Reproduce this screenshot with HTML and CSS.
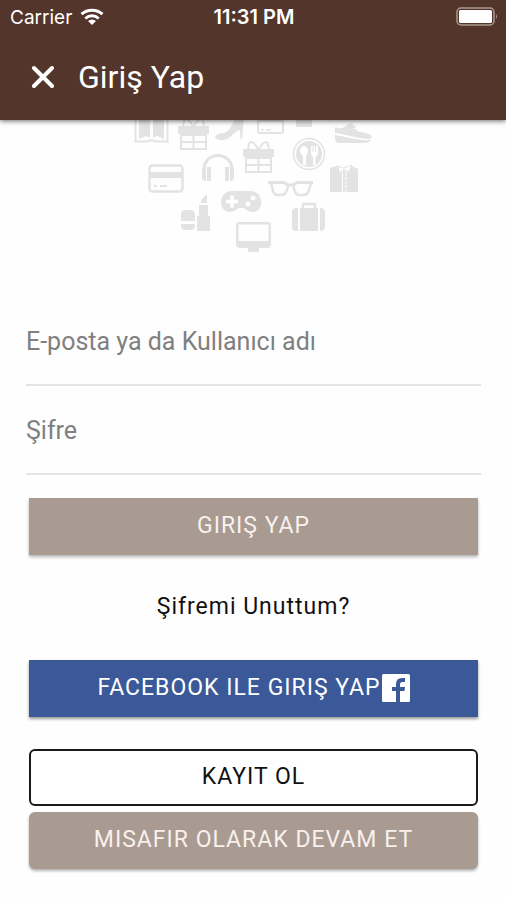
FILE: index.html
```html
<!DOCTYPE html>
<html lang="tr">
<head>
<meta charset="utf-8">
<meta name="viewport" content="width=device-width, initial-scale=1">
<title>Giriş Yap</title>
<link rel="stylesheet" href="styles.css">
</head>
<body>
<header class="header">
  <div class="status">
    <div class="status-carrier">
      <span>Carrier</span>
      <svg width="24" height="18" viewBox="0 0 24 18" fill="none" stroke="#fff" stroke-width="3" aria-hidden="true">
        <path d="M1.500 6.200C7.500.8 16.500.8 22.500 6.200M5.300 10.500C9.300 6.800 14.700 6.800 18.700 10.500"/>
        <path d="M12 17L8 13Q12 9.800 16 13Z" fill="#fff" stroke="none"/>
      </svg>
    </div>
    <time class="status-time">11:31 PM</time>
    <svg class="battery" width="42" height="20" viewBox="0 0 42 20" aria-hidden="true">
      <rect x="1" y="1" width="37" height="17" rx="4" fill="none" stroke="#a99a93" stroke-width="1.500"/>
      <rect x="3" y="3" width="33" height="13" rx="1.500" fill="#fff"/>
      <path d="M40 7q2 2.500 0 5z" fill="#a99a93"/>
    </svg>
  </div>
  <div class="toolbar">
    <button class="close" type="button" aria-label="Kapat">
      <svg width="24" height="24" viewBox="0 0 24 24" stroke="#fff" stroke-width="4" stroke-linecap="round" aria-hidden="true"><path d="M4 3L22 21M22 3L4 21"/></svg>
    </button>
    <h1 class="title">Giriş Yap</h1>
  </div>
</header>
<main class="content">
  <svg class="hero" width="240" height="136" viewBox="134 120 240 136" fill="#e3e3e3" aria-hidden="true">
    <!-- book -->
    <path d="M135.500 118V141.500H147L151.500 140L156 141.500H167.500V118" fill="none" stroke="#e3e3e3" stroke-width="2"/>
    <path d="M139 118H150V138L146 136L139 139ZM153 118H164V139L157 136L153 138Z"/>
    <!-- gift boxes -->
    <g id="gift">
      <path d="M178 126H209V134H178Z"/>
      <path d="M180 134H207V150H180ZM182 136V141H192.500V136ZM194.500 136V141H205V136ZM182 143V148H192.500V143ZM194.500 143V148H205V143Z" fill-rule="evenodd"/>
      <path d="M193 126C189 119 185 117 184 121L183 126M194 126C198 119 202 117 203 121L204 126" fill="none" stroke="#e3e3e3" stroke-width="2"/>
    </g>
    <use href="#gift" x="65" y="23"/>
    <!-- high heel -->
    <path d="M235 119L244 118L243 128L242 139H240.500L240 130C235 131 233 135 229 138C225 141 217 141 215 137C216 134 220 133 224 133C229 132 232 125 235 119Z"/>
    <!-- cards -->
    <rect x="258" y="115" width="25" height="18" rx="2" fill="none" stroke="#e3e3e3" stroke-width="2"/>
    <path d="M258 119H283V122H258ZM261 129H264V130.500H261ZM266 129H271V130.500H266ZM296 118H312V127H296Z"/>
    <rect x="149.500" y="165.500" width="33" height="26" rx="3" fill="none" stroke="#e3e3e3" stroke-width="2.500"/>
    <path d="M149 172H183V178H149ZM154 185H157V187H154ZM160 185H167V187H160Z"/>
    <!-- sneaker -->
    <path d="M335 127C338 129 344 129 347 125L351 123L356 127L353 129L358 129L356 131L361 132C366 133 371 134 372 137L370 139C360 139 348 135 335 133Z"/>
    <path d="M335 135C347 137 359 141 371 140C369 143 366 143 361 143H338C335 142 335 139 335 135Z"/>
    <!-- headphones -->
    <path d="M204 172C202 150 234 150 232 172" fill="none" stroke="#e3e3e3" stroke-width="3"/>
    <path d="M202 169Q203 167 206 167V181H205Q202 180 202 177ZM207 167H211V181H207ZM225 167H229V181H225ZM230 167Q234 167 234 170V177Q234 181 230 181Z"/>
    <!-- plate -->
    <circle cx="309" cy="154" r="15.500" fill="none" stroke="#e3e3e3" stroke-width="1.500"/>
    <circle cx="309" cy="154" r="13"/>
    <path d="M304 146C299 147 299 153 303 156V165H306V156C309 153 309 147 304 146ZM311 146H312.500V152H313.500V146H315V152H316V146H318V153Q318 156 315.500 157V165H313V157Q311 156 311 153Z" fill="#fff"/>
    <!-- glasses -->
    <path d="M268 182.500H284L288 185H293L297 182.500H313" fill="none" stroke="#e3e3e3" stroke-width="3"/>
    <path d="M271 183L273 191Q274 195 278 195H282Q286 195 288 187L288 185M293 185L294 188Q295 195 299 195H303Q308 195 309 190L311 183" fill="none" stroke="#e3e3e3" stroke-width="2.500"/>
    <!-- shirt -->
    <path d="M330 168L337 166L342 173L344 170L347 173L352 166L358 169V192H330Z"/>
    <path d="M337 166L343.500 168L352 165L349 172L344 169L340 173Z" fill="#fff" stroke="#e3e3e3"/>
    <path d="M342.500 173V192" stroke="#fff" stroke-width="1"/>
    <path d="M346 173V192" stroke="#fff" stroke-width="1" stroke-dasharray="3 1"/>
    <!-- gamepad -->
    <path d="M231 191H251C265 192 264 213 252 212C248 212 246 209 244 208H239C237 209 234 212 230 212C218 212 218 192 231 191Z"/>
    <path d="M226 201.500H238M232 195.500V207.500" stroke="#fff" stroke-width="3.500"/>
    <circle cx="253" cy="198" r="2.500" fill="#fff"/><circle cx="248" cy="204" r="2.500" fill="#fff"/>
    <!-- cosmetics -->
    <path d="M181 221V215Q181 210 186 210H190Q195 210 195 215V221ZM181 224H195V226Q195 230 191 230H185Q181 230 181 226ZM197 216H199V205H208V216H210V231H197ZM201 203V200L207 194V203Z"/>
    <!-- suitcase -->
    <path d="M303 208V204H315V208" fill="none" stroke="#e3e3e3" stroke-width="2.500"/>
    <path d="M300 208H318V231H300ZM298 208V231H295Q292 230 292 227V212Q292 209 295 208ZM320 208H322Q325 209 325 212V227Q325 230 320 231Z"/>
    <!-- monitor -->
    <path d="M239 222H268Q271 222 271 225V244Q271 248 267 248H259V252H248V248H240Q236 248 236 244V225Q236 222 239 222ZM238.500 224.500V241H268.500V224.500Z" fill-rule="evenodd"/>
  </svg>
  <form class="form">
    <input class="field" type="text" aria-label="E-posta ya da Kullanıcı adı" placeholder="E-posta ya da Kullanıcı adı">
    <input class="field" type="password" aria-label="Şifre" placeholder="Şifre">
    <div class="actions">
      <button class="btn btn-muted" type="button">GIRIŞ YAP</button>
      <a class="forgot" href="#">Şifremi Unuttum?</a>
      <button class="btn btn-facebook" type="button">
        <span>FACEBOOK ILE GIRIŞ YAP</span>
        <svg width="29" height="29" viewBox="0 0 29 29" aria-hidden="true">
          <rect x="1" y="1" width="28" height="28" rx="1.500" fill="#fff"/>
          <path d="M15 29V18H11V14H15V11Q15 5 21 5H24V9H21.500Q19 9 19 11.500V14H24L23.500 18H19V29Z" fill="#3b5998"/>
        </svg>
      </button>
      <button class="btn btn-outline" type="button">KAYIT OL</button>
      <button class="btn btn-muted btn-round" type="button">MISAFIR OLARAK DEVAM ET</button>
    </div>
  </form>
</main>
</body>
</html>
```
FILE: styles.css
```css
* {
  box-sizing: border-box;
}

body {
  margin: 0;
  background: #fefefe;
  color: #111;
  font-family: Roboto, "Liberation Sans", sans-serif;
}

.header {
  position: relative;
  background: #53352b;
  color: #fff;
  box-shadow: 0 1px 5px rgba(0, 0, 0, 0.6);
}

.status {
  display: grid;
  grid-template-columns: 1fr auto 1fr;
  align-items: center;
  height: 34px;
  padding: 0 8px 0 10px;
  font-family: Inter, "Liberation Sans", sans-serif;
  font-size: 19px;
}

.status-carrier {
  display: flex;
  align-items: center;
  gap: 8px;
}

.status-time {
  font-size: 20px;
  font-weight: 600;
}

.battery {
  justify-self: end;
}

.toolbar {
  display: flex;
  align-items: center;
  gap: 24px;
  height: 86px;
  padding: 0 30px;
}

.close {
  display: flex;
  padding: 0;
  border: 0;
  background: none;
}

.title {
  margin: 0;
  font-size: 32px;
  font-weight: 400;
}

.content {
  padding: 0 25px 31px 26px;
}

.hero {
  display: block;
  margin: 0 auto 41px;
}

.form {
  display: flex;
  flex-direction: column;
}

.field {
  width: 100%;
  height: 89px;
  padding: 2px 0 0;
  border: 0;
  border-bottom: 2px solid #e4e4e4;
  border-radius: 0;
  outline: 0;
  background: none;
  color: #111;
  font: 25px Roboto, "Liberation Sans", sans-serif;
}

.field::placeholder {
  color: #808080;
  opacity: 1;
}

.actions {
  display: flex;
  flex-direction: column;
  padding: 23px 3px 0;
}

.btn {
  display: flex;
  align-items: center;
  justify-content: center;
  height: 57px;
  padding: 0 16px 2px;
  border: 0;
  font: 23px Roboto, "Liberation Sans", sans-serif;
  letter-spacing: 1px;
}

.btn-muted {
  background: #a99a92;
  color: #f8f1ed;
  box-shadow: 0 2px 3px rgba(0, 0, 0, 0.3);
}

.forgot {
  align-self: center;
  margin: 36px 0 37px;
  color: #111;
  font-size: 23px;
  line-height: 32px;
  letter-spacing: 1px;
  text-decoration: none;
}

.btn-facebook {
  background: #3b5998;
  color: #fff;
  box-shadow: 0 2px 3px rgba(0, 0, 0, 0.4);
}

.btn-outline {
  margin: 32px 0 6px;
  border: 2px solid #1a1a1a;
  border-radius: 6px;
  background: #fff;
  color: #111;
}

.btn-round {
  border-radius: 6px;
}
```
